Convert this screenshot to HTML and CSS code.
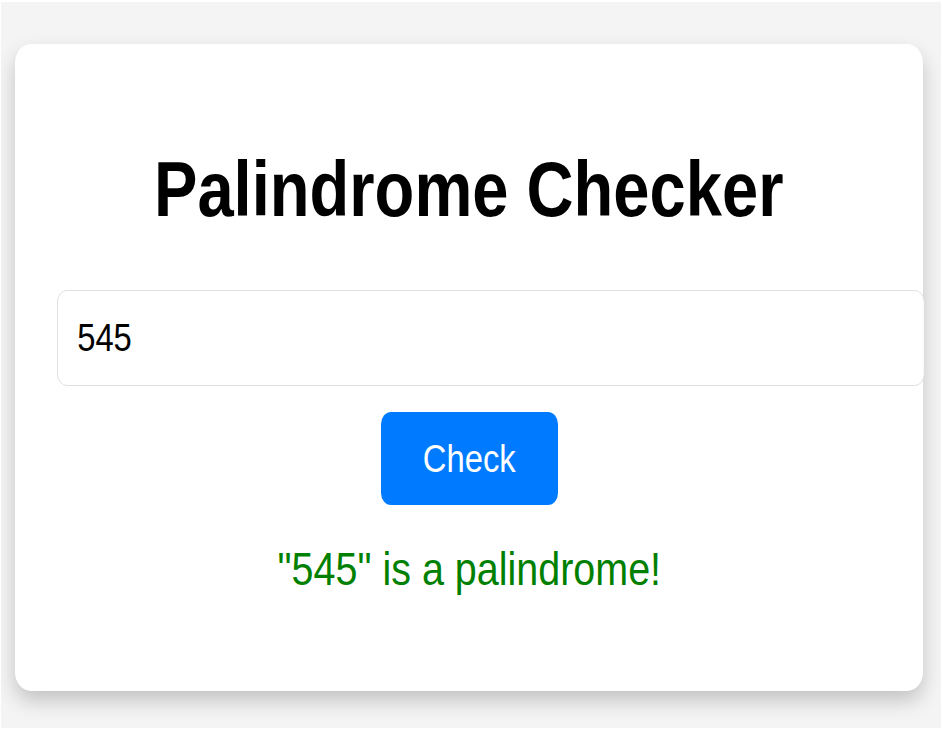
FILE: index.html
```html
<!DOCTYPE html>
<html lang="en">
<head>
<meta charset="utf-8">
<title>Palindrome Checker</title>
<link rel="stylesheet" href="styles.css">
</head>
<body>
  <main class="card">
    <h1 class="title"><span class="squeeze">Palindrome Checker</span></h1>
    <input class="field" type="text" value="545" aria-label="Text to check">
    <button class="check-btn" type="button"><span class="squeeze">Check</span></button>
    <p class="result"><span class="squeeze">"545" is a palindrome!</span></p>
  </main>
</body>
</html>
```

FILE: styles.css
```css
html {
  background: #ffffff;
  overflow: hidden;
}

body {
  margin: 2px 2px 1px 1px;
  height: 726px;
  box-sizing: border-box;
  padding: 42px 18px 0 14px;
  background: #f4f4f4;
  font-family: "Liberation Sans", Arial, sans-serif;
}

.card {
  box-sizing: border-box;
  height: 647px;
  padding: 49px 42px 0 42px;
  background: #ffffff;
  border-radius: 16px / 19px;
  box-shadow: 0 10px 20px rgba(0, 0, 0, 0.2);
  display: flex;
  flex-direction: column;
  align-items: center;
}

.squeeze {
  display: inline-block;
  transform: scaleX(0.84);
  transform-origin: center;
  white-space: nowrap;
}

.title {
  margin: 52px 0 56px;
  font-size: 77.5px;
  line-height: 89px;
  font-weight: 700;
  color: #000;
  text-align: center;
  white-space: nowrap;
}

.field {
  align-self: flex-start;
  box-sizing: border-box;
  width: 1033px;
  height: 96px;
  margin: 0;
  padding: 0 23px;
  border: 1px solid #dcdcdc;
  border-radius: 12px;
  font-family: "Liberation Sans", Arial, sans-serif;
  font-size: 39px;
  color: #000;
  background: #fff;
  outline: none;
  transform: scaleX(0.84);
  transform-origin: left center;
}

.check-btn {
  margin-top: 26px;
  width: 177px;
  height: 93px;
  padding: 0;
  border: none;
  border-radius: 10px / 12px;
  background: #007bff;
  color: #ffffff;
  font-family: "Liberation Sans", Arial, sans-serif;
  font-size: 39px;
  cursor: pointer;
}

.result {
  margin: 37px 0 0;
  font-size: 47px;
  line-height: 54px;
  color: #008000;
  text-align: center;
  white-space: nowrap;
}
```
